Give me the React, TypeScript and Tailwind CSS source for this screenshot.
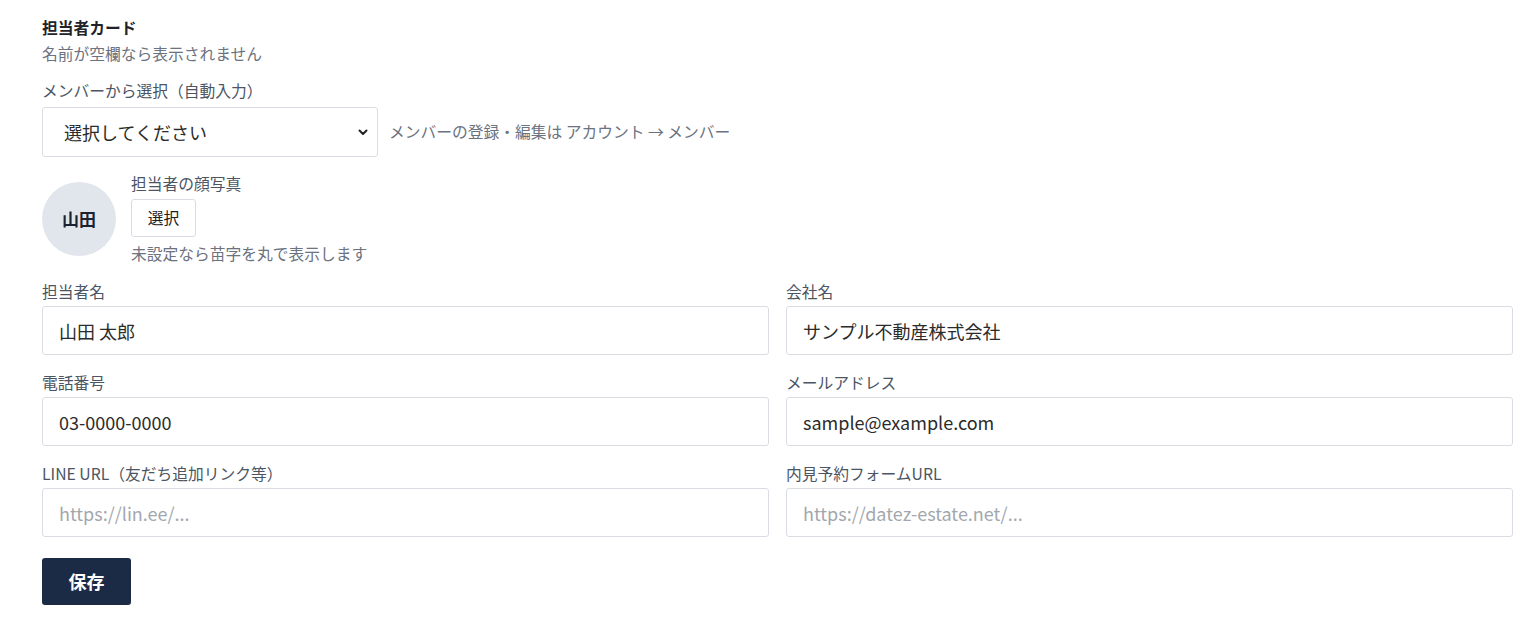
import type { ReactNode } from "react";

const FONT = "font-['Noto_Sans_CJK_JP','Noto_Sans',sans-serif]";

function Field({ label, children }: { label: string; children: ReactNode }) {
  return (
    <div className="flex flex-col">
      <label className="h-[24px] text-[15.75px] leading-[24px] text-[#4b5563]">{label}</label>
      <div className="mt-[2px]">{children}</div>
    </div>
  );
}

function TextInput({ value, placeholder }: { value?: string; placeholder?: string }) {
  return (
    <input
      readOnly
      defaultValue={value}
      placeholder={placeholder}
      className="h-[49px] w-full rounded-[3px] border border-[#d9dde3] bg-white px-[16px] text-[18px] text-[#2b2b2b] outline-none placeholder:text-[#a3a7ad]"
    />
  );
}

export default function App() {
  return (
    <div className={`${FONT} min-h-[636px] bg-white pl-[42px] pr-[27px] pt-[16px]`}>
      <h2 className="text-[15.75px] font-bold leading-[24px] text-[#1f2329]">担当者カード</h2>
      <p className="mt-[2px] text-[15.75px] leading-[24px] text-[#6b7280]">名前が空欄なら表示されません</p>

      <div className="mt-[13px] text-[15.75px] leading-[24px] text-[#4b5563]">メンバーから選択（自動入力）</div>
      <div className="mt-[4px] flex items-center gap-[11px]">
        <div className="relative h-[50px] w-[336px]">
          <select className="h-full w-full appearance-none rounded-[3px] border border-[#d9dde3] bg-white pl-[21px] text-[18px] text-[#2b2b2b] outline-none">
            <option>選択してください</option>
          </select>
          <svg
            className="pointer-events-none absolute right-[9px] top-[19px] h-[12px] w-[12px]"
            viewBox="0 0 12 12"
            fill="none"
            stroke="#222"
            strokeWidth="2"
            strokeLinecap="round"
            strokeLinejoin="round"
          >
            <path d="M2.5 4.5 6 8l3.5-3.5" />
          </svg>
        </div>
        <span className="text-[15.75px] leading-[24px] text-[#6b7280]">メンバーの登録・編集は アカウント → メンバー</span>
      </div>

      <div className="mt-[15px] flex items-center gap-[15px]">
        <div className="flex h-[74px] w-[74px] items-center justify-center rounded-full bg-[#e1e5ec] text-[17px] font-bold text-[#1b2333]">
          山田
        </div>
        <div className="flex flex-col items-start">
          <div className="text-[15.75px] leading-[24px] text-[#4b5563]">担当者の顔写真</div>
          <button className="mt-[3px] h-[38px] w-[65px] rounded-[3px] border border-[#d9dde3] bg-white text-[15.75px] text-[#222]">
            選択
          </button>
          <div className="mt-[5px] text-[15.75px] leading-[24px] text-[#6b7280]">未設定なら苗字を丸で表示します</div>
        </div>
      </div>

      <div className="mt-[14px] grid grid-cols-2 gap-x-[17px] gap-y-[16px]">
        <Field label="担当者名">
          <TextInput value="山田 太郎" />
        </Field>
        <Field label="会社名">
          <TextInput value="サンプル不動産株式会社" />
        </Field>
        <Field label="電話番号">
          <TextInput value="03-0000-0000" />
        </Field>
        <Field label="メールアドレス">
          <TextInput value="sample@example.com" />
        </Field>
        <Field label="LINE URL（友だち追加リンク等）">
          <TextInput placeholder="https://lin.ee/..." />
        </Field>
        <Field label="内見予約フォームURL">
          <TextInput placeholder="https://datez-estate.net/..." />
        </Field>
      </div>

      <button className="mt-[21px] h-[47px] w-[89px] rounded-[3px] bg-[#1c2b45] text-[18px] font-bold text-white">
        保存
      </button>
    </div>
  );
}
